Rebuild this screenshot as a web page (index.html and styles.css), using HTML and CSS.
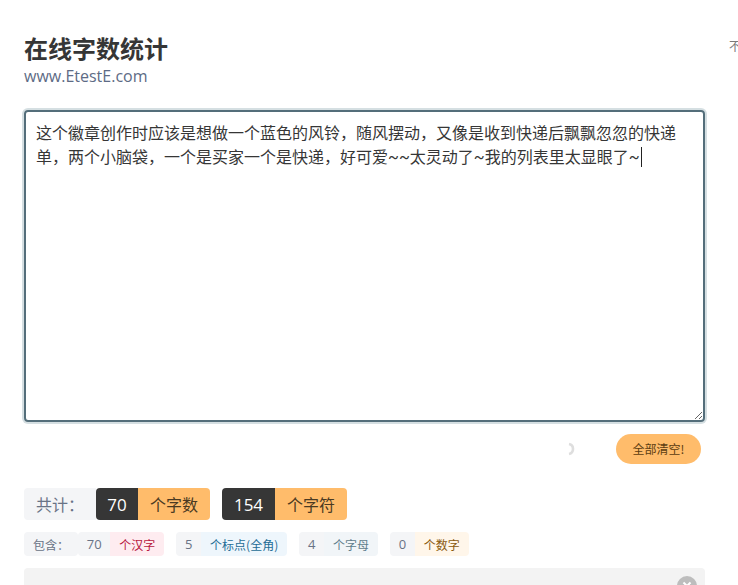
FILE: index.html
```html
<!DOCTYPE html>
<html lang="zh">
<head>
<meta charset="utf-8">
<title>在线字数统计</title>
<link rel="stylesheet" href="styles.css">
</head>
<body>
<div class="side-note">不</div>
<main class="page">
  <header class="head">
    <h1 class="title">在线字数统计</h1>
    <p class="subtitle">www.EtestE.com</p>
  </header>
  <div class="editor">这个徽章创作时应该是想做一个蓝色的风铃，随风摆动，又像是收到快递后飘飘忽忽的快递单，两个小脑袋，一个是买家一个是快递，好可爱~~太灵动了~我的列表里太显眼了~<span class="caret"></span></div>
  <div class="actions">
    <svg class="spinner" width="9" height="14" viewBox="0 0 9 14"><path d="M1 2.1a5 5 0 0 1 0 9.8" fill="none" stroke="#dedede" stroke-width="2.6"/></svg>
    <button class="clear">全部清空!</button>
  </div>
  <div class="totals">
    <span class="tag tag-light total-label">共计：</span>
    <div class="pair"><span class="tag tag-dark n70">70</span><span class="tag tag-warn">个字数</span></div>
    <div class="pair"><span class="tag tag-dark n154">154</span><span class="tag tag-warn">个字符</span></div>
  </div>
  <div class="details">
    <span class="chip chip-num label">包含：</span>
    <div class="pair first"><span class="chip chip-num">70</span><span class="chip danger">个汉字</span></div>
    <div class="pair"><span class="chip chip-num">5</span><span class="chip info">个标点(全角)</span></div>
    <div class="pair"><span class="chip chip-num">4</span><span class="chip plain">个字母</span></div>
    <div class="pair"><span class="chip chip-num">0</span><span class="chip warn">个数字</span></div>
  </div>
  <div class="notice"><span class="close"></span></div>
</main>
</body>
</html>
```
FILE: styles.css
```css
html, body {
  margin: 0;
  height: 585px;
  overflow: hidden;
  background: #fff;
}
body {
  position: relative;
  font-family: "Noto Sans CJK SC", "Liberation Sans", sans-serif;
  color: #4a4a4a;
}
.side-note {
  position: absolute;
  left: 729px;
  top: 37px;
  font-size: 12px;
  color: #7a7a7a;
}
.page {
  width: 681px;
  padding: 34px 0 0 24px;
}
.title {
  margin: 0;
  font-size: 24px;
  line-height: 28px;
  font-weight: 700;
  color: #363636;
}
.subtitle {
  margin: 3px 0 0;
  font-family: "Open Sans", "Liberation Sans", sans-serif;
  font-size: 16px;
  line-height: 22px;
  color: #5d6b85;
}
.editor {
  box-sizing: border-box;
  margin-top: 23px;
  width: 681px;
  height: 312px;
  padding: 10px 10px;
  border: 2px solid #546e7a;
  border-radius: 4px;
  box-shadow: 0 0 0 2px #d5dfe2;
  font-family: Roboto, "Noto Sans CJK SC", sans-serif;
  font-size: 16px;
  line-height: 24px;
  color: #363636;
  overflow: auto;
  resize: vertical;
}
.caret {
  display: inline-block;
  width: 1px;
  height: 20px;
  margin-left: 1px;
  background: #222;
  vertical-align: -4px;
}
.actions {
  display: flex;
  justify-content: flex-end;
  align-items: center;
  margin-top: 12px;
  padding-right: 4px;
  height: 30px;
}
.spinner { margin-right: 39px; }
.clear {
  width: 85px;
  height: 30px;
  padding: 0;
  border: 0;
  border-radius: 15px;
  background: #ffbc6b;
  font: 12px/30px "Noto Sans CJK SC", sans-serif;
  color: #5c3d11;
}
.totals {
  display: flex;
  margin-top: 24px;
  height: 32px;
}
.pair { display: flex; margin-left: 12px; }
.tag {
  display: flex;
  align-items: center;
  height: 32px;
  padding: 0 12px;
  font-size: 16px;
  border-radius: 4px;
}
.tag-light { width: 72px; box-sizing: border-box; background: #f4f5f7; color: #697386; }
.total-label { border-radius: 4px 0 0 4px; }
.tag-dark {
  box-sizing: border-box;
  justify-content: center;
  padding: 0;
  background: #363636;
  color: #fff;
  border-radius: 4px 0 0 4px;
  font-family: "Open Sans", sans-serif;
  font-size: 17px;
}
.n70 { width: 42px; }
.n154 { width: 53px; }
.totals .pair:nth-child(2) { margin-left: 0; }
.tag-warn {
  background: #ffbc6b;
  color: #4a3a22;
  border-radius: 0 4px 4px 0;
}
.details {
  display: flex;
  margin-top: 12px;
  height: 24px;
}
.chip {
  display: flex;
  align-items: center;
  height: 24px;
  padding: 0 9px;
  font-size: 12px;
  border-radius: 4px 0 0 4px;
}
.chip + .chip { border-radius: 0 4px 4px 0; }
.chip-num {
  padding: 0 8.7px;
  background: #f4f5f7;
  color: #697386;
  font-family: "Open Sans", sans-serif;
  font-size: 13px;
}
.label {
  padding: 0 9px;
  font-family: "Noto Sans CJK SC", sans-serif;
  font-size: 12px;
  border-radius: 4px;
}
.first { margin-left: 0 !important; }
.danger { background: #feecf0; color: #b8183f; }
.info { background: #eef6fc; color: #256d96; }
.plain { background: #f1f5f8; color: #5f7d8c; }
.warn { background: #fff6ea; color: #8a5a10; }
.notice {
  position: relative;
  margin-top: 12px;
  height: 17px;
  overflow: hidden;
  border-radius: 4px 4px 0 0;
  background: #f3f3f3;
}
.close {
  position: absolute;
  right: 8px;
  top: 8px;
  width: 20px;
  height: 20px;
  border-radius: 50%;
  background: #bdbdbd;
}
.close::before,
.close::after {
  content: "";
  position: absolute;
  left: 5px;
  top: 9px;
  width: 10px;
  height: 2px;
  background: #fff;
  transform: rotate(45deg);
}
.close::after { transform: rotate(-45deg); }
```
